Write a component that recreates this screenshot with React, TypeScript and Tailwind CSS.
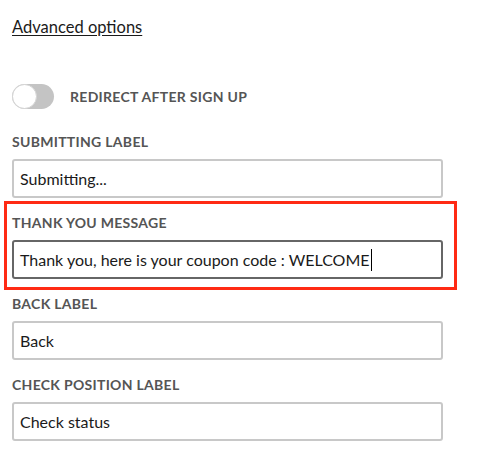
import React from 'react';

type Field = {
  label: string;
  value: string;
  active?: boolean;
};

const fields: Field[] = [
  { label: 'Submitting label', value: 'Submitting...' },
  { label: 'Thank you message', value: 'Thank you, here is your coupon code : WELCOME', active: true },
  { label: 'Back label', value: 'Back' },
  { label: 'Check position label', value: 'Check status' },
];

const FieldBlock = ({ field }: { field: Field }) => (
  <div className="relative">
    {field.active && (
      <div className="pointer-events-none absolute -left-[8px] -right-[14px] -top-[13px] -bottom-[11px] border-[3px] border-[#ff2a14]" />
    )}
    <div className="h-[18px] text-[14px] leading-[18px] font-bold uppercase tracking-[0.3px] text-[#555555]">
      {field.label}
    </div>
    <div
      className={`mt-2 flex h-[39px] items-center rounded-[3px] border-2 px-[6px] text-[16px] text-[#1a1a1a] ${
        field.active ? 'border-[#666666]' : 'border-[#c8c8c8]'
      }`}
    >
      <span>{field.value}</span>
      {field.active && <span className="ml-[1px] h-[22px] w-[1px] bg-black" />}
    </div>
  </div>
);

const App = () => {
  return (
    <div className="min-h-[467px] w-[483px] bg-white font-['Lato','Open_Sans',sans-serif]">
      <div className="w-[443px] pl-3 pt-[15px]">
        <a href="#" className="text-[16.5px] leading-[20px] text-[#1a1a1a] underline underline-offset-2">
          Advanced options
        </a>

        <div className="mt-[45px] flex items-center gap-4">
          <div className="flex h-[25px] w-[42px] items-center rounded-full bg-[#c4c4c4]">
            <div className="h-[25px] w-[25px] rounded-full border border-[#d4d4d4] bg-white" />
          </div>
          <span className="text-[14px] font-bold uppercase tracking-[0.3px] text-[#555555]">
            Redirect after sign up
          </span>
        </div>

        <div className="mt-[24px] flex flex-col gap-4">
          {fields.map((f) => (
            <FieldBlock key={f.label} field={f} />
          ))}
        </div>
      </div>
    </div>
  );
};

export default App;
